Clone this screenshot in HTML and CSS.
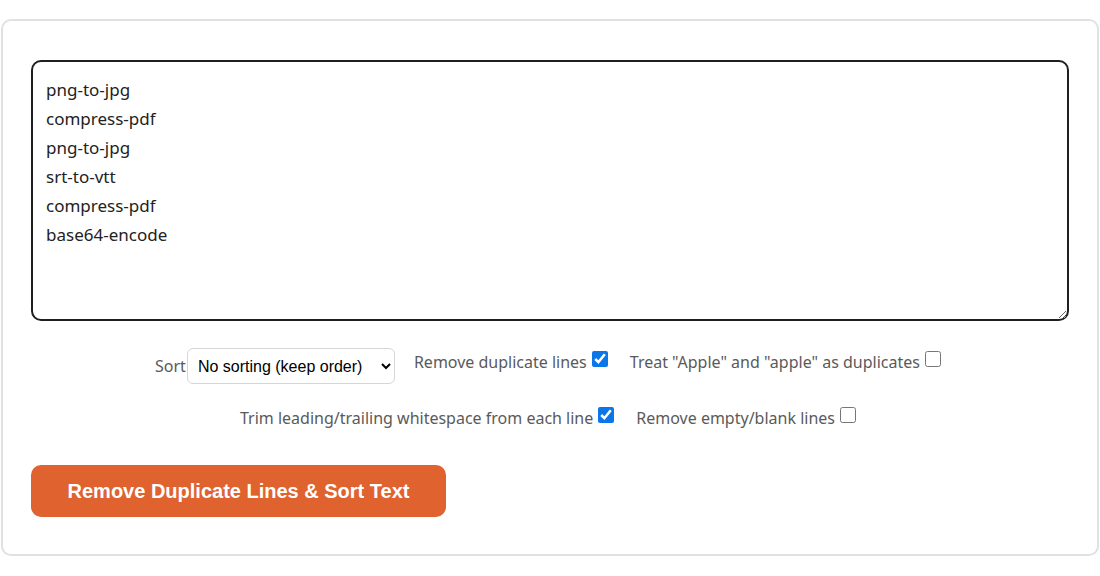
FILE: index.html
```html
<!DOCTYPE html>
<html>
<head>
<meta charset="utf-8">
<link rel="stylesheet" href="styles.css">
</head>
<body>
<div class="card">
<textarea class="input" spellcheck="false">png-to-jpg
compress-pdf
png-to-jpg
srt-to-vtt
compress-pdf
base64-encode</textarea>
<div class="options">
  <div class="row row-one">
    <label class="opt sort">Sort<select class="select"><option>No sorting (keep order)</option></select></label>
    <label class="opt">Remove duplicate lines<input type="checkbox" checked></label>
    <label class="opt">Treat "Apple" and "apple" as duplicates<input type="checkbox"></label>
  </div>
  <div class="row row-two">
    <label class="opt">Trim leading/trailing whitespace from each line<input type="checkbox" checked></label>
    <label class="opt">Remove empty/blank lines<input type="checkbox"></label>
  </div>
</div>
<button class="btn">Remove Duplicate Lines &amp; Sort Text</button>
</div>
</body>
</html>
```

FILE: styles.css
```css
html, body {
  margin: 0;
  padding: 0;
  background: #ffffff;
}
body {
  font-family: "Noto Sans", "Open Sans", sans-serif;
}
.card {
  box-sizing: border-box;
  margin: 19px 0 0 1px;
  width: 1098px;
  border: 2px solid #dfe2e5;
  border-radius: 10px;
  padding: 39px 28px 37px;
  background: #fff;
}
.input {
  display: block;
  box-sizing: border-box;
  width: 1038px;
  height: 261px;
  border: 2px solid #1f1f1f;
  border-radius: 10px;
  padding: 13px 13px;
  margin: 0;
  font-family: "Noto Sans", sans-serif;
  font-size: 17px;
  line-height: 29px;
  color: #222;
  resize: vertical;
  outline: none;
}
.options {
  margin-top: 27px;
  padding-right: 4px;
}
.row {
  display: flex;
  justify-content: center;
  align-items: flex-start;
  gap: 22px;
}
.row-two {
  margin-top: 20px;
}
.opt {
  display: flex;
  align-items: center;
  font-size: 16px;
  line-height: 28px;
  color: #5a5a5a;
  white-space: pre;
}
.opt.sort {
  height: 36px;
  margin-right: -3px;
}
.opt input {
  margin: 0 0 0 5px;
  width: 16px;
  height: 16px;
  accent-color: #0b76e8;
  position: relative;
  top: -3px;
}
.select {
  box-sizing: border-box;
  height: 36px;
  width: 208px;
  margin-left: 1px;
  padding: 0 6px;
  border: 1px solid #d6d6d6;
  border-radius: 6px;
  background: #fff;
  font-family: "Liberation Sans", Arial, sans-serif;
  font-size: 16px;
  color: #000;
}
.btn {
  display: block;
  margin-top: 33px;
  width: 415px;
  height: 52px;
  border: none;
  border-radius: 10px;
  background: #e0622f;
  color: #fff;
  font-family: "Liberation Sans", Arial, sans-serif;
  font-weight: bold;
  font-size: 20px;
}
```
